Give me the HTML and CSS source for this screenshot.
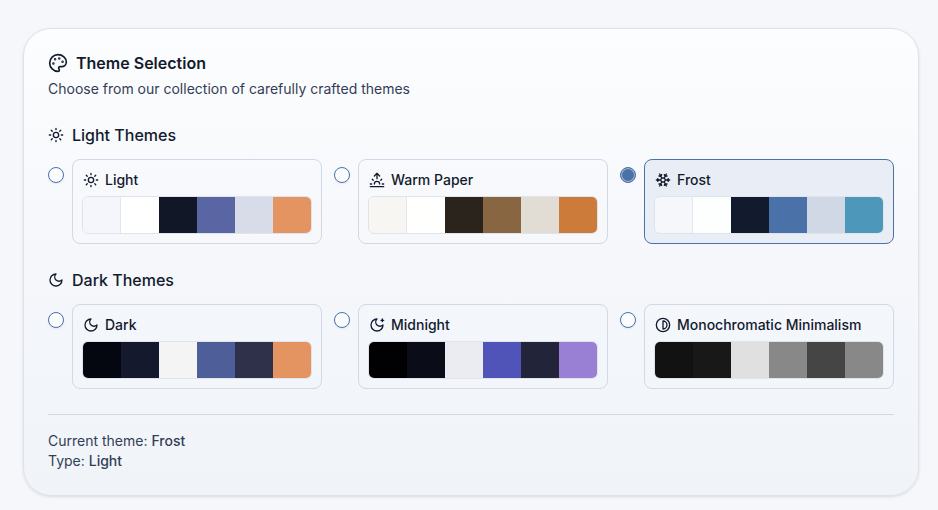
FILE: index.html
```html
<!DOCTYPE html>
<html lang="en">
<head>
	<meta charset="UTF-8">
	<meta name="viewport" content="width=device-width, initial-scale=1">
	<title>Theme Selection</title>
	<link rel="stylesheet" href="styles.css">
</head>
<body>
	<!-- shared icons -->
	<svg class="sprite" aria-hidden="true">
		<symbol id="icon-palette" viewBox="0 0 24 24">
			<circle cx="13.5" cy="6.5" r=".5" fill="currentColor"/>
			<circle cx="17.5" cy="10.5" r=".5" fill="currentColor"/>
			<circle cx="8.5" cy="7.5" r=".5" fill="currentColor"/>
			<circle cx="6.5" cy="12.5" r=".5" fill="currentColor"/>
			<path d="M12 2C6.5 2 2 6.5 2 12s4.5 10 10 10c.926 0 1.648-.746 1.648-1.688 0-.437-.18-.835-.437-1.125-.29-.289-.438-.652-.438-1.125a1.64 1.64 0 0 1 1.668-1.668h1.996c3.051 0 5.555-2.503 5.555-5.554C21.965 6.012 17.461 2 12 2z"/>
		</symbol>
		<symbol id="icon-sun" viewBox="0 0 24 24">
			<circle cx="12" cy="12" r="4"/>
			<path d="M12 2v2M12 20v2M4.93 4.93l1.41 1.41M17.66 17.66l1.41 1.41M2 12h2M20 12h2M6.34 17.66l-1.41 1.41M19.07 4.93l-1.41 1.41"/>
		</symbol>
		<symbol id="icon-sunrise" viewBox="0 0 24 24">
			<path d="M12 2v8M4.93 10.93l1.41 1.41M2 18h2M20 18h2M19.07 10.93l-1.41 1.41M22 22H2M8 6l4-4 4 4M16 18a4 4 0 0 0-8 0"/>
		</symbol>
		<symbol id="icon-snowflake" viewBox="0 0 24 24">
			<path d="M10 20l-1.25-2.5L6 18M10 4L8.75 6.5 6 6M14 20l1.25-2.5L18 18M14 4l1.25 2.5L18 6M17 21l-3-6h-4M17 3l-3 6 1.5 3M2 12h6.5L10 9M20 10l-1.5 2 1.5 2M22 12h-6.5L14 15M4 10l1.5 2L4 14M7 21l3-6-1.5-3M7 3l3 6h4"/>
		</symbol>
		<symbol id="icon-moon" viewBox="0 0 24 24">
			<path d="M12 3a6 6 0 0 0 9 9 9 9 0 1 1-9-9Z"/>
		</symbol>
		<symbol id="icon-moon-star" viewBox="0 0 24 24">
			<path d="M12 3a6 6 0 0 0 9 9 9 9 0 1 1-9-9M20 3v4M22 5h-4"/>
		</symbol>
		<symbol id="icon-contrast" viewBox="0 0 24 24">
			<circle cx="12" cy="12" r="10"/>
			<path d="M12 18a6 6 0 0 0 0-12v12z"/>
		</symbol>
	</svg>

	<main class="card">
		<header class="card-header">
			<h1 class="card-title"><svg class="icon icon-lg"><use href="#icon-palette"/></svg>Theme Selection</h1>
			<p class="card-desc">Choose from our collection of carefully crafted themes</p>
		</header>

		<form class="themes">
			<section class="group">
				<h2 class="group-title"><svg class="icon"><use href="#icon-sun"/></svg>Light Themes</h2>
				<div class="options">
					<div class="option">
						<input class="radio" type="radio" name="theme" id="light" value="light">
						<label class="theme" for="light">
							<span class="theme-name"><svg class="icon"><use href="#icon-sun"/></svg>Light</span>
							<span class="swatches light"><i></i><i></i><i></i><i></i><i></i><i></i></span>
						</label>
					</div>
					<div class="option">
						<input class="radio" type="radio" name="theme" id="warm" value="warm">
						<label class="theme" for="warm">
							<span class="theme-name"><svg class="icon"><use href="#icon-sunrise"/></svg>Warm Paper</span>
							<span class="swatches warm"><i></i><i></i><i></i><i></i><i></i><i></i></span>
						</label>
					</div>
					<div class="option">
						<input class="radio" type="radio" name="theme" id="frost" value="frost" checked>
						<label class="theme" for="frost">
							<span class="theme-name"><svg class="icon"><use href="#icon-snowflake"/></svg>Frost</span>
							<span class="swatches frost"><i></i><i></i><i></i><i></i><i></i><i></i></span>
						</label>
					</div>
				</div>
			</section>

			<section class="group">
				<h2 class="group-title"><svg class="icon"><use href="#icon-moon"/></svg>Dark Themes</h2>
				<div class="options">
					<div class="option">
						<input class="radio" type="radio" name="theme" id="dark" value="dark">
						<label class="theme" for="dark">
							<span class="theme-name"><svg class="icon"><use href="#icon-moon"/></svg>Dark</span>
							<span class="swatches dark"><i></i><i></i><i></i><i></i><i></i><i></i></span>
						</label>
					</div>
					<div class="option">
						<input class="radio" type="radio" name="theme" id="midnight" value="midnight">
						<label class="theme" for="midnight">
							<span class="theme-name"><svg class="icon"><use href="#icon-moon-star"/></svg>Midnight</span>
							<span class="swatches midnight"><i></i><i></i><i></i><i></i><i></i><i></i></span>
						</label>
					</div>
					<div class="option">
						<input class="radio" type="radio" name="theme" id="mono" value="mono">
						<label class="theme" for="mono">
							<span class="theme-name"><svg class="icon"><use href="#icon-contrast"/></svg>Monochromatic Minimalism</span>
							<span class="swatches mono"><i></i><i></i><i></i><i></i><i></i><i></i></span>
						</label>
					</div>
				</div>
			</section>
		</form>

		<footer class="current">
			<p>Current theme: <strong>Frost</strong></p>
			<p>Type: <strong>Light</strong></p>
		</footer>
	</main>
</body>
</html>
```
FILE: styles.css
```css
*{
	box-sizing: border-box;
	margin: 0;
	padding: 0;
}
body{
	padding: 28px 19px 14px 23px;
	background: #f6f7fb;
	color: #121b2d;
	font-family: Inter, "Liberation Sans", sans-serif;
	font-size: 14px;
	line-height: 20px;
}
.sprite{
	display: none;
}
.icon{
	flex: none;
	width: 16px;
	height: 16px;
	fill: none;
	stroke: currentColor;
	stroke-width: 2;
	stroke-linecap: round;
	stroke-linejoin: round;
}
.icon-lg{
	width: 20px;
	height: 20px;
}

.card{
	max-width: 896px;
	margin: 0 auto;
	padding: 24px;
	border: 1px solid #dfe2e8;
	border-radius: 28px;
	background: linear-gradient(#fcfdfe, #f5f7fb 50%, #f0f4f9);
	box-shadow: 0 1px 3px rgba(20, 27, 45, 0.12);
}
.card-header{
	display: flex;
	flex-direction: column;
	gap: 6px;
	margin-bottom: 24px;
}
.card-title{
	display: flex;
	align-items: center;
	gap: 8px;
	font-size: 16px;
	font-weight: 600;
	line-height: 20px;
}
.card-desc{
	color: #333d55;
}

.themes{
	display: flex;
	flex-direction: column;
	gap: 24px;
}
.group-title{
	display: flex;
	align-items: center;
	gap: 8px;
	margin-bottom: 12px;
	font-size: 16px;
	font-weight: 500;
	line-height: 24px;
}
.options{
	display: grid;
	grid-template-columns: repeat(3, minmax(0, 1fr));
	gap: 12px;
}
.option{
	display: flex;
	align-items: flex-start;
	gap: 8px;
}
.radio{
	flex: none;
	appearance: none;
	width: 16px;
	height: 16px;
	margin-top: 8px;
	border: 1px solid #4a72a8;
	border-radius: 50%;
	background: #fafcfe;
	box-shadow: 0 1px 2px rgba(20, 27, 45, 0.08);
}
.radio:checked{
	background: #4a72a8;
	box-shadow: inset 0 0 0 1px #a9bdd8;
}
.theme{
	flex: 1;
	min-width: 0;
	padding: 10px 9px 9px;
	border: 1px solid #d1d8e6;
	border-radius: 8px;
	cursor: pointer;
}
.radio:checked + .theme{
	border-color: #4a72a8;
	background: #e9eef6;
}
.theme-name{
	display: flex;
	align-items: center;
	gap: 6px;
	margin-bottom: 6px;
	padding-left: 1px;
	font-weight: 500;
}

.swatches{
	display: flex;
	height: 38px;
	border: 1px solid #dfe3ec;
	border-radius: 6px;
	overflow: hidden;
}
.swatches i{
	flex: 1;
}
.light i:first-child,
.warm i:first-child,
.frost i:first-child{
	box-shadow: inset -1px 0 #e3e6ee;
}
.light i:nth-child(1){ background: #f5f6fb; }
.light i:nth-child(2){ background: #ffffff; }
.light i:nth-child(3){ background: #121728; }
.light i:nth-child(4){ background: #5a66a4; }
.light i:nth-child(5){ background: #d8dbe8; }
.light i:nth-child(6){ background: #e49460; }

.warm i:nth-child(1){ background: #f7f6f2; }
.warm i:nth-child(2){ background: #fffffd; }
.warm i:nth-child(3){ background: #2b241c; }
.warm i:nth-child(4){ background: #896642; }
.warm i:nth-child(5){ background: #e1dcd4; }
.warm i:nth-child(6){ background: #cc7b3a; }

.frost i:nth-child(1){ background: #f5f7fb; }
.frost i:nth-child(2){ background: #fdfffe; }
.frost i:nth-child(3){ background: #121b2d; }
.frost i:nth-child(4){ background: #4a72a8; }
.frost i:nth-child(5){ background: #d0d8e6; }
.frost i:nth-child(6){ background: #4d98ba; }

.dark i:nth-child(1){ background: #04070f; }
.dark i:nth-child(2){ background: #15192d; }
.dark i:nth-child(3){ background: #f4f4f5; }
.dark i:nth-child(4){ background: #4d5e98; }
.dark i:nth-child(5){ background: #2e3149; }
.dark i:nth-child(6){ background: #e49460; }

.midnight i:nth-child(1){ background: #010104; }
.midnight i:nth-child(2){ background: #0a0d17; }
.midnight i:nth-child(3){ background: #ebecf1; }
.midnight i:nth-child(4){ background: #5054b9; }
.midnight i:nth-child(5){ background: #222439; }
.midnight i:nth-child(6){ background: #9a80d5; }

.mono i:nth-child(1){ background: #121212; }
.mono i:nth-child(2){ background: #181818; }
.mono i:nth-child(3){ background: #e0e0e0; }
.mono i:nth-child(4){ background: #888888; }
.mono i:nth-child(5){ background: #454545; }
.mono i:nth-child(6){ background: #888888; }

.current{
	margin-top: 25px;
	padding-top: 16px;
	border-top: 1px solid #d0d8e2;
	color: #333d55;
}
.current strong{
	font-weight: 500;
}
```
